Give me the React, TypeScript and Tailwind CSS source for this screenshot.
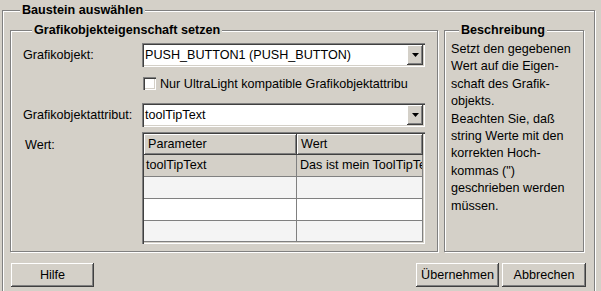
const etched = "border border-[#808080] shadow-[inset_1px_1px_#ffffff,1px_1px_#ffffff]";
const raised = "shadow-[inset_-1px_-1px_#404040,inset_1px_1px_#ffffff,inset_-2px_-2px_#808080,inset_2px_2px_#d4d0c8]";
const sunken = "shadow-[inset_1px_1px_#808080,inset_2px_2px_#404040,inset_-1px_-1px_#ffffff,inset_-2px_-2px_#d4d0c8]";

const Combo = ({ value }: { value: string }) => (
  <div className={`flex w-[283px] h-[24px] p-[2px] bg-white ${sunken}`}>
    <div className="flex-1 pl-[1px] leading-[20px] whitespace-nowrap overflow-hidden">{value}</div>
    <div className={`w-[16px] h-[20px] bg-[#d4d0c8] flex items-center justify-center ${raised}`}>
      <svg width="7" height="4" viewBox="0 0 7 4">
        <path d="M0 0h7L3.5 4z" fill="#000" />
      </svg>
    </div>
  </div>
);

const rows = [
  { p: "toolTipText", w: "Das ist mein ToolTipText", bg: "bg-[#d4d0c8]", h: "h-[22px]" },
  { p: "", w: "", bg: "bg-[#f4f4f4]", h: "h-[22px]" },
  { p: "", w: "", bg: "bg-white", h: "h-[22px]" },
  { p: "", w: "", bg: "bg-[#f4f4f4]", h: "h-[21px]" },
];

const Btn = ({ label, w }: { label: string; w: string }) => (
  <button className={`${w} h-[24px] bg-[#d4d0c8] text-center leading-[24px] ${raised}`}>{label}</button>
);

export default function App() {
  return (
    <div className="w-[601px] h-[291px] overflow-hidden bg-[#d4d0c8] font-['Liberation_Sans',Arial,sans-serif] text-[12.6px] text-black leading-[16px]">
      <fieldset className={`ml-[2px] mt-[3px] w-[593px] h-[310px] pl-[7px] pr-[10px] ${etched}`}>
        <legend className="ml-[10px] px-[2px] font-bold leading-[15px] bg-[#d4d0c8]">Baustein auswählen</legend>

        <div className="flex gap-[6px] mt-[5px]">
          <fieldset className={`w-[428px] h-[229px] pl-[12px] ${etched}`}>
            <legend className="ml-[9px] px-[2px] font-bold leading-[15px] bg-[#d4d0c8]">
              Grafikobjekteigenschaft setzen
            </legend>

            <div className="flex items-center mt-[5px]">
              <div className="w-[119px]">Grafikobjekt:</div>
              <Combo value="PUSH_BUTTON1 (PUSH_BUTTON)" />
            </div>

            <div className="flex items-center gap-[4px] mt-[10px] pl-[120px] h-[13px]">
              <div className="w-[13px] h-[13px] bg-white shadow-[inset_1px_1px_#808080,inset_2px_2px_#404040,inset_-1px_-1px_#ffffff,inset_-2px_-2px_#d4d0c8]" />
              <span className="whitespace-nowrap">Nur UltraLight kompatible Grafikobjektattribu</span>
            </div>

            <div className="flex items-center mt-[13px]">
              <div className="w-[119px]">Grafikobjektattribut:</div>
              <Combo value="toolTipText" />
            </div>

            <div className="flex mt-[5px]">
              <div className="w-[119px] pl-[2px] pt-[5px]">Wert:</div>
              <div className={`w-[283px] h-[112px] p-[2px] bg-[#d4d0c8] ${sunken}`}>
                <div className="flex h-[21px]">
                  <div className={`w-[153px] pl-[4px] leading-[21px] ${raised}`}>Parameter</div>
                  <div className={`w-[126px] pl-[4px] leading-[21px] ${raised}`}>Wert</div>
                </div>
                {rows.map((r, i) => (
                  <div key={i} className={`flex ${r.h} ${r.bg} border-b border-[#808080]`}>
                    <div className="w-[153px] pl-[2px] leading-[21px] border-r border-[#808080] whitespace-nowrap overflow-hidden">
                      {r.p}
                    </div>
                    <div className="w-[126px] pl-[3px] leading-[21px] border-r border-[#808080] whitespace-nowrap overflow-hidden">
                      {r.w}
                    </div>
                  </div>
                ))}
              </div>
            </div>
          </fieldset>

          <fieldset className={`w-[140px] h-[229px] pl-[6px] ${etched}`}>
            <legend className="ml-[8px] px-[2px] font-bold leading-[15px] bg-[#d4d0c8]">Beschreibung</legend>
            <p className="mt-[3px] leading-[17.4px] whitespace-nowrap">
              Setzt den gegebenen
              <br />
              Wert auf die Eigen-
              <br />
              schaft des Grafik-
              <br />
              objekts.
              <br />
              Beachten Sie, daß
              <br />
              string Werte mit den
              <br />
              korrekten Hoch-
              <br />
              kommas (")
              <br />
              geschrieben werden
              <br />
              müssen.
            </p>
          </fieldset>
        </div>

        <div className="flex items-center mt-[11px] pl-[1px] -mr-[2px]">
          <Btn label="Hilfe" w="w-[83px]" />
          <div className="flex-1" />
          <div className="flex gap-[3px]">
            <Btn label="Übernehmen" w="w-[83px]" />
            <Btn label="Abbrechen" w="w-[84px]" />
          </div>
        </div>
      </fieldset>
    </div>
  );
}
